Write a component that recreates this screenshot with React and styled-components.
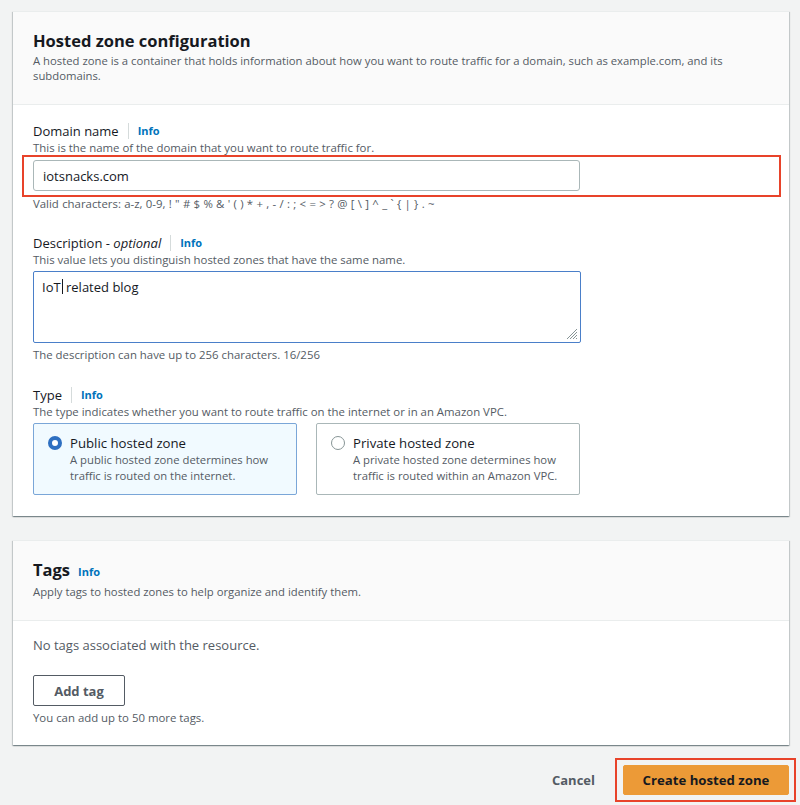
import styled, { createGlobalStyle } from "styled-components";

const GlobalStyle = createGlobalStyle`
  html, body {
    margin: 0;
    padding: 0;
    background: #f2f3f3;
  }
  body {
    font-family: "Open Sans", "Noto Sans", Arial, sans-serif;
    color: #16191f;
  }
`;

const Page = styled.div`
  width: 800px;
  height: 805px;
  box-sizing: border-box;
  padding: 11px 11px 0 13px;
  display: flex;
  flex-direction: column;
  gap: 24px;
`;

const Card = styled.div`
  background: #fff;
  box-shadow: 0 1px 1px 0 rgba(0, 28, 36, 0.3), 1px 1px 1px 0 rgba(0, 28, 36, 0.15),
    -1px 1px 1px 0 rgba(0, 28, 36, 0.15);
  border-top: 1px solid #eaeded;
`;

const CardHeader = styled.div`
  background: #fafafa;
  border-bottom: 1px solid #eaeded;
  padding: 17px 20px 21px;
`;

const Title = styled.h2`
  margin: 0;
  font-size: 16.5px;
  font-weight: 700;
  line-height: 24px;
  display: flex;
  align-items: baseline;
  gap: 8px;
`;

const Desc = styled.p`
  margin: 0;
  font-size: 11.3px;
  line-height: 15px;
  color: #545b64;
`;

const CardBody = styled.div`
  padding: ${(p) => p.$pad || "18px 20px 20px"};
  display: flex;
  flex-direction: column;
`;

const Field = styled.div`
  display: flex;
  flex-direction: column;
  margin-top: ${(p) => p.$mt || "0"};
  margin-bottom: ${(p) => p.$mb || "0"};
`;

const LabelRow = styled.div`
  display: flex;
  align-items: center;
  font-size: 13px;
  line-height: 18px;
  color: #16191f;
`;

const Info = styled.a`
  font-size: 11px;
  font-weight: 700;
  color: #0073bb;
  text-decoration: none;
  border-left: 1px solid #d5dbdb;
  margin-left: 9px;
  padding-left: 9px;
  line-height: 16px;
`;

const TitleInfo = styled.a`
  font-size: 11px;
  font-weight: 700;
  color: #0073bb;
  text-decoration: none;
`;

const Hint = styled.div`
  font-size: 11.4px;
  line-height: 15px;
  color: #545b64;
  margin-top: ${(p) => p.$mt || "0"};
  word-spacing: ${(p) => p.$ws || "normal"};
`;

const Highlight = styled.div`
  border: 2.5px solid #e8432a;
  margin: 0 -12px 0 -11px;
  padding: 3px 10px 4px 9px;
`;

const Input = styled.div`
  height: 31px;
  box-sizing: border-box;
  border: 1px solid #aab7b8;
  border-radius: 3px;
  padding: 0 9px;
  display: flex;
  align-items: center;
  font-size: 13px;
  color: #16191f;
  width: 547px;
`;

const TextArea = styled.div`
  position: relative;
  margin-top: 4px;
  height: 72px;
  width: 548px;
  box-sizing: border-box;
  border: 1.5px solid #4a7fc9;
  border-radius: 2px;
  padding: 5px 8px;
  font-size: 13px;
  line-height: 20px;
`;

const Caret = styled.span`
  display: inline-block;
  width: 1px;
  height: 15px;
  background: #16191f;
  vertical-align: -2px;
  margin-left: 1px;
`;

const Resize = styled.svg`
  position: absolute;
  right: 2px;
  bottom: 2px;
`;

const Tiles = styled.div`
  display: grid;
  grid-template-columns: 264px 264px;
  column-gap: 19px;
  margin-top: 4px;
`;

const Tile = styled.div`
  height: 72px;
  box-sizing: border-box;
  border: 1px solid ${(p) => (p.$selected ? "#7aa6d8" : "#aab7b8")};
  background: ${(p) => (p.$selected ? "#f1faff" : "#fff")};
  border-radius: 2px;
  padding: 10px 14px;
  display: flex;
  gap: 8px;
`;

const Radio = styled.span`
  flex: none;
  width: 14px;
  height: 14px;
  box-sizing: border-box;
  border-radius: 50%;
  margin-top: 2px;
  border: ${(p) => (p.$checked ? "4px solid #2e6fc1" : "1px solid #879596")};
  background: #fff;
`;

const TileText = styled.div`
  display: flex;
  flex-direction: column;
`;

const TileTitle = styled.div`
  font-size: 13.2px;
  line-height: 18px;
  color: #16191f;
`;

const TileDesc = styled.div`
  font-size: 11.3px;
  line-height: 16px;
  color: #545b64;
`;

const Empty = styled.div`
  font-size: 13px;
  color: #545b64;
  line-height: 18px;
`;

const Button = styled.button`
  font-family: inherit;
  font-weight: 700;
  font-size: 13px;
  border-radius: 2px;
  cursor: pointer;
  box-sizing: border-box;
  ${(p) =>
    p.$variant === "primary"
      ? `
    background: #ec9a37;
    border: 1px solid #ec9a37;
    color: #16191f;
    font-size: 13.2px;
    height: 30px;
    width: 166px;
  `
      : p.$variant === "link"
      ? `
    background: none;
    border: none;
    color: #545b64;
    padding: 0;
  `
      : `
    background: #fff;
    border: 1px solid #545b64;
    color: #545b64;
    height: 31px;
    width: 92px;
  `}
`;

const Footer = styled.div`
  display: flex;
  justify-content: flex-end;
  align-items: center;
  gap: 20px;
  margin-top: -11px;
`;

const ButtonHighlight = styled.div`
  border: 2.5px solid #e8432a;
  padding: 5px 5px 5px 6px;
  margin-right: -7px;
`;

export default function App() {
  return (
    <>
      <GlobalStyle />
      <Page>
        <Card>
          <CardHeader>
            <Title>Hosted zone configuration</Title>
            <Desc>
              A hosted zone is a container that holds information about how you want to route traffic for a
              domain, such as example.com, and its subdomains.
            </Desc>
          </CardHeader>
          <CardBody $pad="17px 20px 21px">
            <Field $mb="23px">
              <LabelRow>
                Domain name<Info href="#">Info</Info>
              </LabelRow>
              <Hint>This is the name of the domain that you want to route traffic for.</Hint>
              <Highlight>
                <Input>iotsnacks.com</Input>
              </Highlight>
              <Hint $mt="-1px" $ws="0.35px">
                Valid characters: a-z, 0-9, ! " # $ % &amp; ' ( ) * + , - / : ; &lt; = &gt; ? @ [ \ ] ^ _ ` {"{"} | {"}"} . ~
              </Hint>
            </Field>
            <Field $mb="24px">
              <LabelRow>
                Description -&nbsp;<i>optional</i>
                <Info href="#">Info</Info>
              </LabelRow>
              <Hint>This value lets you distinguish hosted zones that have the same name.</Hint>
              <TextArea>
                IoT<Caret /> related blog
                <Resize width="14" height="14" viewBox="0 0 14 14">
                  <path
                    d="M13 3 L3 13 M13 6 L6 13 M13 9 L9 13 M13 12 L12 13"
                    stroke="#879596"
                    strokeWidth="1"
                    fill="none"
                  />
                </Resize>
              </TextArea>
              <Hint $mt="4px">The description can have up to 256 characters. 16/256</Hint>
            </Field>
            <Field>
              <LabelRow>
                Type<Info href="#">Info</Info>
              </LabelRow>
              <Hint>The type indicates whether you want to route traffic on the internet or in an Amazon VPC.</Hint>
              <Tiles>
                <Tile $selected>
                  <Radio $checked />
                  <TileText>
                    <TileTitle>Public hosted zone</TileTitle>
                    <TileDesc>
                      A public hosted zone determines how
                      <br />
                      traffic is routed on the internet.
                    </TileDesc>
                  </TileText>
                </Tile>
                <Tile>
                  <Radio />
                  <TileText>
                    <TileTitle>Private hosted zone</TileTitle>
                    <TileDesc>
                      A private hosted zone determines how
                      <br />
                      traffic is routed within an Amazon VPC.
                    </TileDesc>
                  </TileText>
                </Tile>
              </Tiles>
            </Field>
          </CardBody>
        </Card>

        <Card>
          <CardHeader>
            <Title>
              Tags <TitleInfo href="#">Info</TitleInfo>
            </Title>
            <Desc>Apply tags to hosted zones to help organize and identify them.</Desc>
          </CardHeader>
          <CardBody $pad="15px 20px 20px">
            <Empty>No tags associated with the resource.</Empty>
            <Field $mt="21px">
              <Button>Add tag</Button>
              <Hint $mt="4px">You can add up to 50 more tags.</Hint>
            </Field>
          </CardBody>
        </Card>

        <Footer>
          <Button $variant="link">Cancel</Button>
          <ButtonHighlight>
            <Button $variant="primary">Create hosted zone</Button>
          </ButtonHighlight>
        </Footer>
      </Page>
    </>
  );
}
